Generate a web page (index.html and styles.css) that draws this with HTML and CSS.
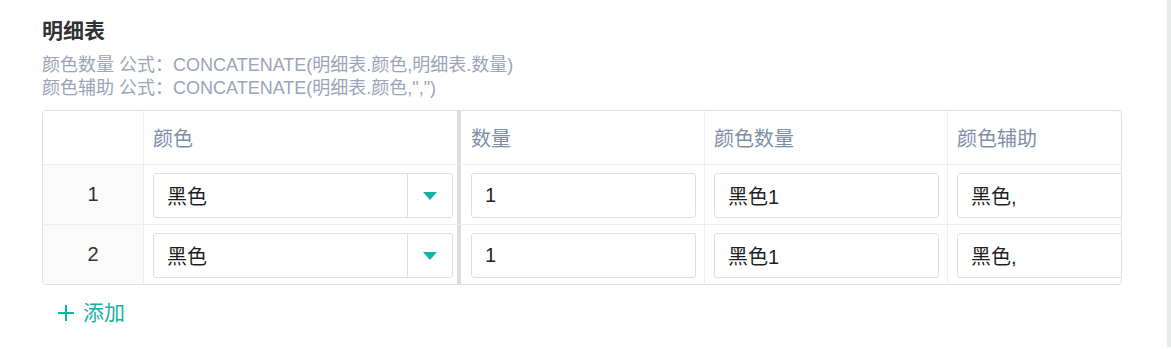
FILE: index.html
```html
<!DOCTYPE html>
<html lang="zh-CN">
<head>
    <meta charset="UTF-8">
    <meta name="viewport" content="width=device-width, initial-scale=1.0">
    <title>明细表</title>
    <link rel="stylesheet" href="styles.css">
</head>
<body>
    <div class="layout">
        <main class="page">
            <h2 class="title">明细表</h2>
            <div class="formula">颜色数量 公式：CONCATENATE(明细表.颜色,明细表.数量)</div>
            <div class="formula">颜色辅助 公式：CONCATENATE(明细表.颜色,",")</div>

            <div class="detail-table">
                <div class="row head">
                    <div class="cell idx"></div>
                    <div class="cell col-color">颜色</div>
                    <div class="cell col-qty">数量</div>
                    <div class="cell col-mix">颜色数量</div>
                    <div class="cell col-aux">颜色辅助</div>
                </div>
                <div class="row">
                    <div class="cell idx">1</div>
                    <div class="cell col-color">
                        <div class="select">
                            <span class="select-value">黑色</span>
                            <span class="select-arrow">
                                <svg width="14" height="8" viewBox="0 0 14 8"><polygon points="0,0 14,0 7,8" fill="#13b3a3"/></svg>
                            </span>
                        </div>
                    </div>
                    <div class="cell col-qty"><div class="input">1</div></div>
                    <div class="cell col-mix"><div class="input">黑色1</div></div>
                    <div class="cell col-aux"><div class="input">黑色,</div></div>
                </div>
                <div class="row">
                    <div class="cell idx">2</div>
                    <div class="cell col-color">
                        <div class="select">
                            <span class="select-value">黑色</span>
                            <span class="select-arrow">
                                <svg width="14" height="8" viewBox="0 0 14 8"><polygon points="0,0 14,0 7,8" fill="#13b3a3"/></svg>
                            </span>
                        </div>
                    </div>
                    <div class="cell col-qty"><div class="input">1</div></div>
                    <div class="cell col-mix"><div class="input">黑色1</div></div>
                    <div class="cell col-aux"><div class="input">黑色,</div></div>
                </div>
            </div>

            <a href="#" class="add-btn">
                <svg width="18" height="18" viewBox="0 0 18 18"><path d="M9 1v16M1 9h16" stroke="#13b3a3" stroke-width="2" fill="none"/></svg>
                添加
            </a>
        </main>
        <div class="scrollbar"></div>
    </div>
</body>
</html>
```

FILE: styles.css
```css
body {
    margin: 0;
    font-family: "Liberation Sans", "Noto Sans CJK SC", sans-serif;
    background: #ffffff;
    color: #222222;
}

.layout {
    display: flex;
    align-items: flex-start;
}

.page {
    flex: 1;
    padding: 18px 0 0 42px;
}

.scrollbar {
    width: 4px;
    height: 347px;
    background-color: #e6eae9;
}

.title {
    margin: 0 0 10px;
    font-size: 21px;
    line-height: 26px;
    font-weight: bold;
    color: #303133;
}

.formula {
    font-size: 18px;
    line-height: 23px;
    color: #9aa5b8;
}

.detail-table {
    width: 1080px;
    box-sizing: border-box;
    margin-top: 10px;
    border: 1px solid #dcdfe6;
    border-radius: 4px;
    overflow: hidden;
}

.row {
    display: flex;
    height: 60px;
    box-sizing: border-box;
    border-bottom: 1px solid #ebeef5;
}

.row.head {
    height: 54px;
}

.row:last-child {
    height: 59px;
    border-bottom: 0;
}

.cell {
    flex-shrink: 0;
    box-sizing: border-box;
    display: flex;
    align-items: center;
    padding: 2px 8px 0 9px;
    border-right: 1px solid #ebeef5;
    font-size: 20px;
}

.head .cell {
    padding-top: 0;
    color: #7f8ea8;
}

.idx {
    width: 101px;
    justify-content: center;
    padding: 0;
    background-color: #fafafa;
    color: #333333;
}

.head .idx {
    background-color: #ffffff;
}

.col-color {
    width: 317px;
    padding-right: 4px;
    border-right: 4px solid #dcdcdc;
}

.col-qty {
    width: 244px;
    padding-left: 10px;
}

.col-mix {
    width: 243px;
}

.col-aux {
    width: 243px;
}

.input,
.select {
    width: 100%;
    height: 45px;
    box-sizing: border-box;
    border: 1px solid #dcdfe6;
    border-radius: 3px;
    display: flex;
    align-items: center;
    font-size: 20px;
    color: #1f1f1f;
}

.input {
    padding-left: 13px;
}

.select-value {
    flex: 1;
    padding-left: 13px;
}

.select-arrow {
    width: 44px;
    height: 100%;
    border-left: 1px solid #dcdfe6;
    display: flex;
    align-items: center;
    justify-content: center;
}

.add-btn {
    display: inline-flex;
    align-items: center;
    gap: 8px;
    margin: 14px 0 0 15px;
    font-size: 21px;
    line-height: 28px;
    color: #13b3a3;
    text-decoration: none;
}
```
